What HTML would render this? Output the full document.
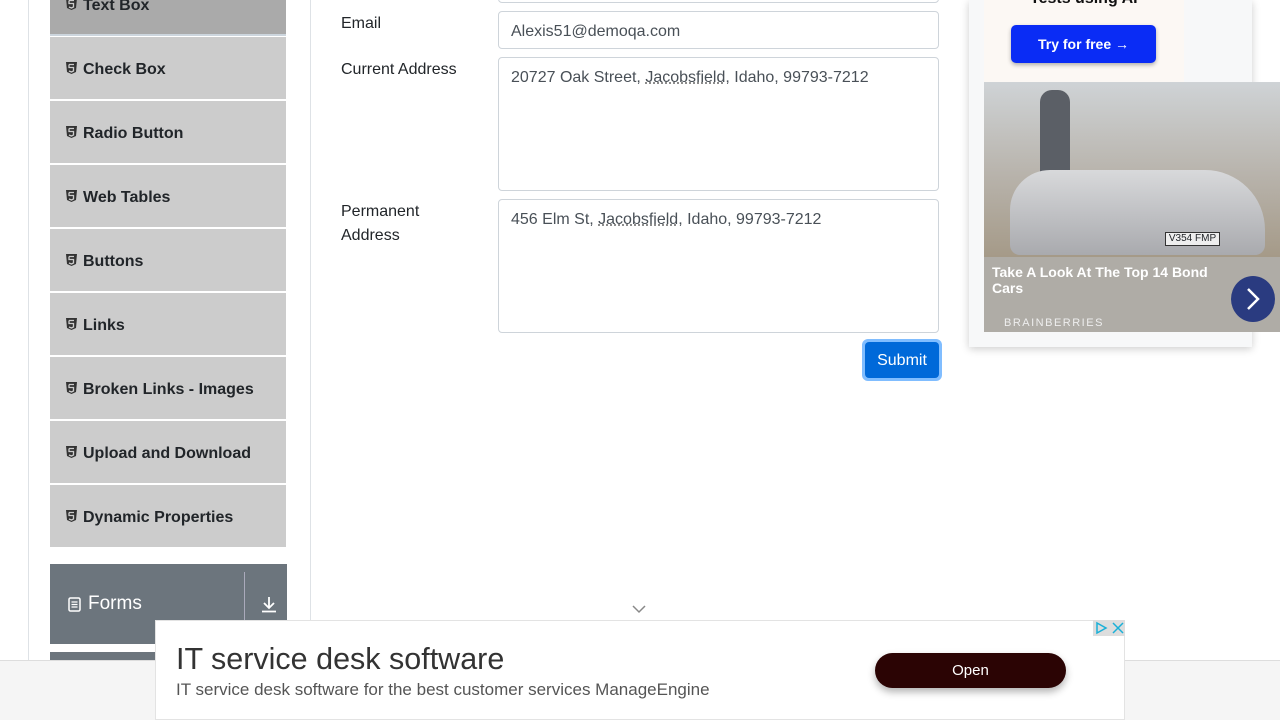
<!DOCTYPE html>
<html><head><style>
*{box-sizing:border-box;margin:0;padding:0}
body{width:1280px;height:720px;overflow:hidden;background:#fff;font-family:"Liberation Sans",sans-serif;position:relative;color:#212529}
.abs{position:absolute}
.item{position:absolute;left:50px;width:236px;height:62px;background:#ccc;font-weight:bold;font-size:16px;display:flex;align-items:center;padding-left:16px;padding-top:3px;color:#212529}
.item svg{margin-right:6px;margin-top:-3px}
.lbl{position:absolute;left:341px;font-size:16px;color:#212529;line-height:24px}
.inp{position:absolute;left:498px;width:441px;border:1px solid #ced4da;border-radius:4px;font-size:16px;color:#495057;padding:8px 12px 6px;line-height:24px}
u{text-decoration:underline dotted #666}
</style></head><body>
<div class="abs" style="left:28px;top:0;width:1px;height:660px;background:#dee2e6"></div>
<div class="abs" style="left:310px;top:0;width:1px;height:660px;background:#dee2e6"></div>

<div class="item" style="top:-26px;height:62px;background:#aaa;border-bottom:2px solid #ccd5dd"><svg width="11" height="12" viewBox="0 0 11 12"><path d="M0 0h11l-1 10-4.5 2L1 10z" fill="#333"/><path d="M3 2.5h5M3 2.5v3h4.5v3.5L5.5 10 3 9" stroke="#ccc" stroke-width="1.3" fill="none"/></svg>Text Box</div>
<div class="item" style="top:37px"><svg width="11" height="12" viewBox="0 0 11 12"><path d="M0 0h11l-1 10-4.5 2L1 10z" fill="#333"/><path d="M3 2.5h5M3 2.5v3h4.5v3.5L5.5 10 3 9" stroke="#ccc" stroke-width="1.3" fill="none"/></svg>Check Box</div>
<div class="item" style="top:101px"><svg width="11" height="12" viewBox="0 0 11 12"><path d="M0 0h11l-1 10-4.5 2L1 10z" fill="#333"/><path d="M3 2.5h5M3 2.5v3h4.5v3.5L5.5 10 3 9" stroke="#ccc" stroke-width="1.3" fill="none"/></svg>Radio Button</div>
<div class="item" style="top:165px"><svg width="11" height="12" viewBox="0 0 11 12"><path d="M0 0h11l-1 10-4.5 2L1 10z" fill="#333"/><path d="M3 2.5h5M3 2.5v3h4.5v3.5L5.5 10 3 9" stroke="#ccc" stroke-width="1.3" fill="none"/></svg>Web Tables</div>
<div class="item" style="top:229px"><svg width="11" height="12" viewBox="0 0 11 12"><path d="M0 0h11l-1 10-4.5 2L1 10z" fill="#333"/><path d="M3 2.5h5M3 2.5v3h4.5v3.5L5.5 10 3 9" stroke="#ccc" stroke-width="1.3" fill="none"/></svg>Buttons</div>
<div class="item" style="top:293px"><svg width="11" height="12" viewBox="0 0 11 12"><path d="M0 0h11l-1 10-4.5 2L1 10z" fill="#333"/><path d="M3 2.5h5M3 2.5v3h4.5v3.5L5.5 10 3 9" stroke="#ccc" stroke-width="1.3" fill="none"/></svg>Links</div>
<div class="item" style="top:357px"><svg width="11" height="12" viewBox="0 0 11 12"><path d="M0 0h11l-1 10-4.5 2L1 10z" fill="#333"/><path d="M3 2.5h5M3 2.5v3h4.5v3.5L5.5 10 3 9" stroke="#ccc" stroke-width="1.3" fill="none"/></svg>Broken Links - Images</div>
<div class="item" style="top:421px"><svg width="11" height="12" viewBox="0 0 11 12"><path d="M0 0h11l-1 10-4.5 2L1 10z" fill="#333"/><path d="M3 2.5h5M3 2.5v3h4.5v3.5L5.5 10 3 9" stroke="#ccc" stroke-width="1.3" fill="none"/></svg>Upload and Download</div>
<div class="item" style="top:485px"><svg width="11" height="12" viewBox="0 0 11 12"><path d="M0 0h11l-1 10-4.5 2L1 10z" fill="#333"/><path d="M3 2.5h5M3 2.5v3h4.5v3.5L5.5 10 3 9" stroke="#ccc" stroke-width="1.3" fill="none"/></svg>Dynamic Properties</div>

<div class="abs" style="left:50px;top:564px;width:237px;height:80px;background:#6c757d;color:#fff;font-size:19px">
<div class="abs" style="left:18px;top:29px;display:flex;align-items:center"><svg width="13" height="15" viewBox="0 0 13 15" style="margin-right:7px"><rect x="1" y="1" width="11" height="13" rx="1.5" fill="none" stroke="#fff" stroke-width="1.5"/><path d="M3.5 5h6M3.5 7.5h6M3.5 10h6" stroke="#fff" stroke-width="1.2"/></svg>Forms</div>
<div class="abs" style="left:194px;top:8px;width:1px;height:64px;background:#aab"></div>
<svg class="abs" style="left:211px;top:32px" width="16" height="17" viewBox="0 0 16 17"><path d="M8 1v11M3 7l5 5 5-5M1 15.5h14" stroke="#fff" stroke-width="1.8" fill="none"/></svg>
</div>
<div class="abs" style="left:50px;top:652px;width:237px;height:20px;background:#6c757d"></div>

<div class="inp" style="top:-30px;height:33px"></div>
<div class="lbl" style="top:12px">Email</div>
<div class="inp" style="top:11px;height:38px">Alexis51@demoqa.com</div>
<div class="lbl" style="top:58px">Current Address</div>
<div class="inp" style="top:57px;height:134px">20727 Oak Street, <u>Jacobsfield</u>, Idaho, 99793-7212</div>
<div class="lbl" style="top:200px">Permanent<br>Address</div>
<div class="inp" style="top:199px;height:134px">456 Elm St, <u>Jacobsfield</u>, Idaho, 99793-7212</div>
<div class="abs" style="left:862px;top:339px;width:80px;height:42px;border-radius:6px;background:#80bdff;padding:3px">
<div style="background:#0069d9;border-radius:4px;height:100%;color:#fff;font-size:16px;display:flex;align-items:center;justify-content:center;padding-top:2px">Submit</div></div>

<svg class="abs" style="left:632px;top:604px" width="14" height="10" viewBox="0 0 14 10"><path d="M1 2l6 6 6-6" stroke="#888" stroke-width="1.5" fill="none"/></svg>

<div class="abs" style="left:969px;top:0;width:283px;height:347px;background:#f7f8f9;box-shadow:0 2px 8px rgba(0,0,0,.2)"></div>
<div class="abs" style="left:984px;top:0;width:200px;height:82px;background:#fcf8f4"></div>
<div class="abs" style="left:1030px;top:-10px;font-weight:bold;font-size:16px;color:#111">Tests using AI</div>
<div class="abs" style="left:1011px;top:25px;width:145px;height:38px;background:#0a2cf5;border-radius:5px;box-shadow:0 2px 4px rgba(0,0,0,.3);color:#fff;font-weight:bold;font-size:14px;display:flex;align-items:center;justify-content:center">Try for free →</div>
<div class="abs" style="left:984px;top:82px;width:296px;height:175px;background:linear-gradient(180deg,#cfd3d6 0%,#b7b2aa 55%,#a59a88 100%)"></div>
<div class="abs" style="left:1040px;top:90px;width:30px;height:160px;background:#5b5f66;border-radius:12px 12px 2px 2px"></div>
<div class="abs" style="left:1010px;top:170px;width:255px;height:85px;background:linear-gradient(180deg,#d8d9db,#a9aaae);border-radius:40px 60px 10px 10px"></div>
<div class="abs" style="left:1165px;top:232px;width:55px;height:14px;background:#eee;border:1px solid #333;font-size:10px;text-align:center;line-height:12px">V354 FMP</div>
<div class="abs" style="left:984px;top:257px;width:296px;height:75px;background:#afaca6"></div>
<div class="abs" style="left:992px;top:264px;width:230px;color:#fff;font-weight:bold;font-size:14px;line-height:16px">Take A Look At The Top 14 Bond Cars</div>
<div class="abs" style="left:1004px;top:317px;color:#eee;font-size:11px;letter-spacing:1.5px">BRAINBERRIES</div>
<div class="abs" style="left:1231px;top:276px;width:44px;height:46px;border-radius:50%;background:#2a3b80"></div>
<svg class="abs" style="left:1244px;top:287px" width="18" height="24" viewBox="0 0 18 24"><path d="M4 2l10 10-10 10" stroke="#fff" stroke-width="2.5" fill="none"/></svg>

<div class="abs" style="left:0;top:660px;width:1280px;height:60px;background:#f5f5f5;border-top:1px solid #ddd"></div>
<div class="abs" style="left:155px;top:620px;width:970px;height:100px;background:#fff;border:1px solid #e3e3e3"></div>
<div class="abs" style="left:176px;top:642px;font-size:30.5px;color:#333">IT service desk software</div>
<div class="abs" style="left:176px;top:680px;font-size:17px;color:#555">IT service desk software for the best customer services ManageEngine</div>
<div class="abs" style="left:875px;top:653px;width:191px;height:35px;border-radius:18px;background:#2b0404;color:#fff;font-size:15px;display:flex;align-items:center;justify-content:center;box-shadow:0 4px 8px rgba(0,0,0,.3)">Open</div>
<div class="abs" style="left:1093px;top:620px;width:32px;height:16px;background:#ddd"></div>
<svg class="abs" style="left:1095px;top:621px" width="30" height="14" viewBox="0 0 30 14"><path d="M2 2v10l9-5z" stroke="#1ab0d8" stroke-width="1.5" fill="none"/><path d="M18 2l10 10M28 2L18 12" stroke="#1ab0d8" stroke-width="1.5"/></svg>
</body></html>
